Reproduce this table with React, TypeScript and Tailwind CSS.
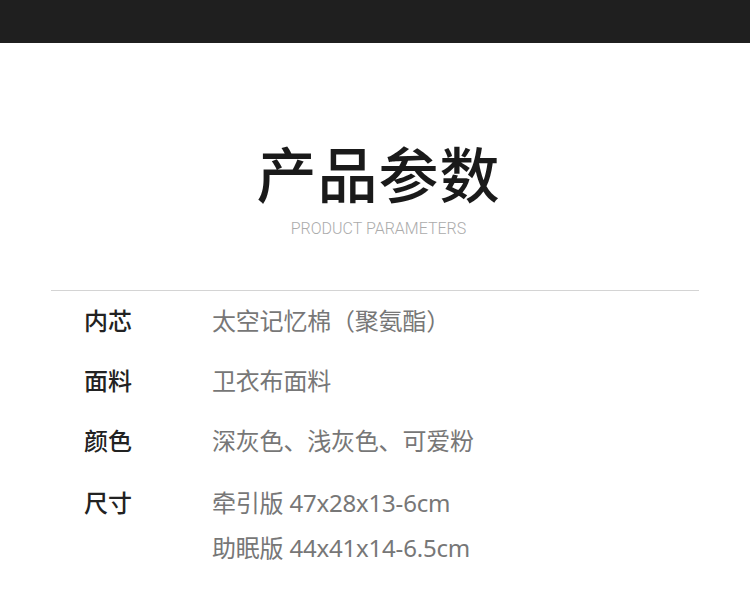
const rows: { label: string; values: string[] }[] = [
  { label: "内芯", values: ["太空记忆棉（聚氨酯）"] },
  { label: "面料", values: ["卫衣布面料"] },
  { label: "颜色", values: ["深灰色、浅灰色、可爱粉"] },
  { label: "尺寸", values: ["牵引版 47x28x13-6cm", "助眠版 44x41x14-6.5cm"] },
]

export default function App() {
  return (
    <div className="w-[750px] h-[608px] bg-white overflow-hidden font-['Noto_Sans','Noto_Sans_CJK_SC',sans-serif]">
      <div className="h-[43px] bg-[#1f1f1f]" />

      <div className="flex flex-col items-center pt-[99px] pl-[7px]">
        <h1 className="text-[60px] leading-none font-medium text-[#1a1a1a] tracking-[1px] font-['Noto_Sans_CJK_SC',sans-serif]">
          产品参数
        </h1>
        <p className="mt-[17px] text-[16px] leading-[20px] font-light text-[#ababab] font-['Roboto',sans-serif]">
          PRODUCT PARAMETERS
        </p>
      </div>

      <div className="mx-[51px] mt-[51px] border-t border-[#d4d4d4]" />

      <div className="flex flex-col gap-[30px] pt-[15px] pl-[84px]">
        {rows.map((row, i) => (
          <div key={row.label} className={i === 3 ? "flex mt-[2px]" : "flex"}>
            <div className="w-[128px] text-[24px] leading-[30px] font-medium text-[#222]">{row.label}</div>
            <div className="flex flex-col gap-[15px]">
              {row.values.map((v) => (
                <div key={v} className="text-[24px] leading-[30px] text-[#777] tracking-[-0.2px]">
                  {v}
                </div>
              ))}
            </div>
          </div>
        ))}
      </div>
    </div>
  )
}
